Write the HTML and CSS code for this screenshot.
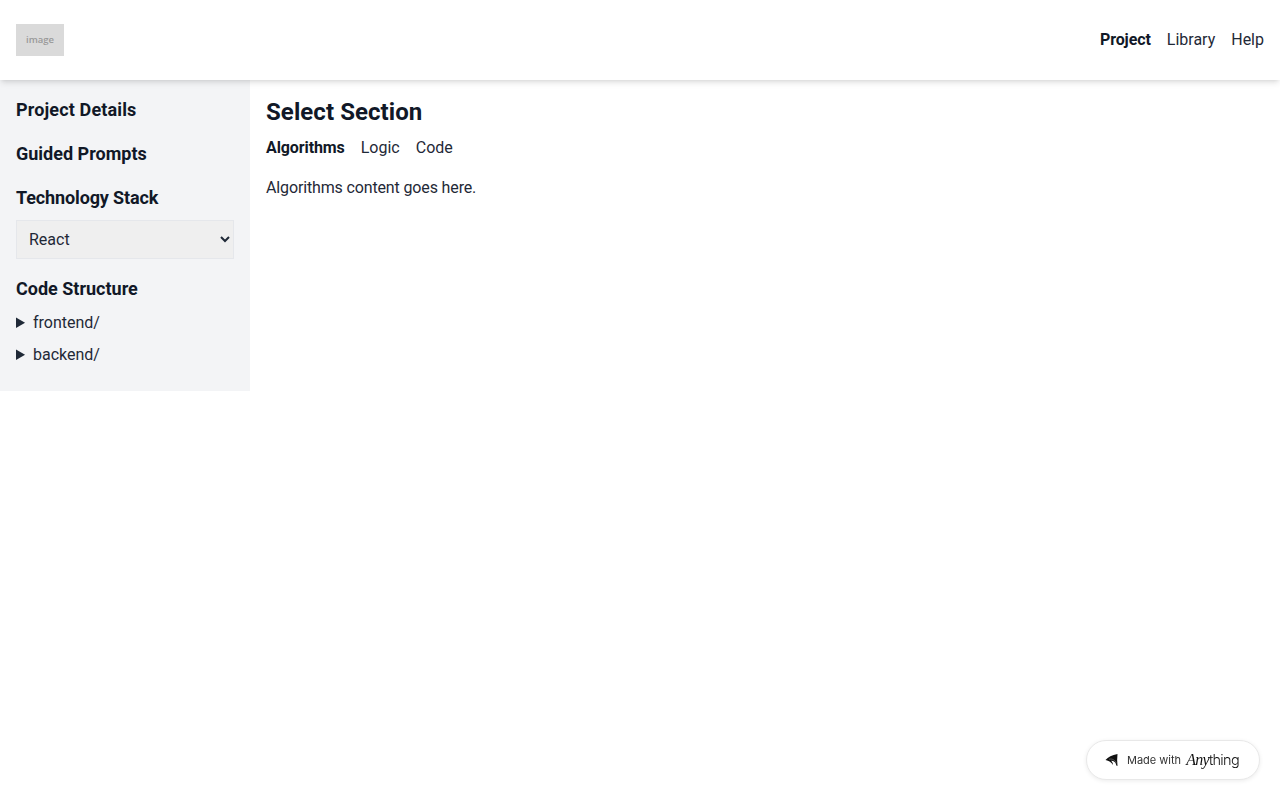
FILE: index.html
```html
<!DOCTYPE html>
<html lang="en">
<head>
    <meta charset="UTF-8">
    <meta name="viewport" content="width=device-width, initial-scale=1.0">
    <title>Project</title>
    <link rel="stylesheet" href="styles.css">
</head>
<body>

    <header class="topbar">
        <div class="logo"><span>image</span></div>
        <nav class="topnav">
            <a href="#" class="active">Project</a>
            <a href="#">Library</a>
            <a href="#">Help</a>
        </nav>
    </header>

    <div class="layout">
        <aside class="sidebar">
            <h2 class="details-title">Project Details</h2>
            <h2>Guided Prompts</h2>
            <h2 class="stack-title">Technology Stack</h2>
            <select class="stack-select">
                <option>React</option>
                <option>Vue</option>
                <option>Angular</option>
            </select>
            <h2 class="code-title">Code Structure</h2>
            <details>
                <summary>frontend/</summary>
            </details>
            <details>
                <summary>backend/</summary>
            </details>
        </aside>

        <main class="content">
            <h1>Select Section</h1>
            <div class="tabs">
                <a href="#" class="active">Algorithms</a>
                <a href="#">Logic</a>
                <a href="#">Code</a>
            </div>
            <p>Algorithms content goes here.</p>
        </main>
    </div>

    <a href="#" class="made-with">
        <svg width="14" height="13" viewBox="0 0 14 13">
            <path d="M.5 6C3 3 7 1 12.500 0c-.5 4-.5 8 0 12l-1.200-.6C11 8.800 9 6.800 6 6.800c1.200.9 1.900 2.300 2 4.200C6.500 8.300 4 6.600.5 6z" fill="#111"/>
            <path d="M4 5.200c3.500-.7 6.200 1 7.200 4" fill="none" stroke="#888" stroke-width=".6"/>
        </svg>
        <span class="made-text">Made with</span>
        <span class="brand"><i>Any</i>thing</span>
    </a>

</body>
</html>
```

FILE: styles.css
```css
* {
    box-sizing: border-box;
}
body {
    font-family: Roboto, sans-serif;
    font-size: 16px;
    line-height: 24px;
    color: #1f2937;
    background-color: #fff;
    margin: 0;
    min-height: 100vh;
}
h1, h2 {
    color: #111827;
}
a {
    color: inherit;
    text-decoration: none;
}
.topbar {
    display: flex;
    justify-content: space-between;
    align-items: center;
    height: 80px;
    padding: 0 16px;
    background: #fff;
    box-shadow: 0 4px 6px -1px rgba(0, 0, 0, 0.1), 0 2px 4px -2px rgba(0, 0, 0, 0.1);
    position: relative;
}
.logo {
    display: flex;
    justify-content: center;
    align-items: center;
    width: 48px;
    height: 32px;
    background: #dadada;
    color: #999;
    font-family: "Open Sans", sans-serif;
    font-size: 9.500px;
    line-height: 14px;
    font-weight: 600;
}
.topnav {
    display: flex;
    gap: 16px;
}
.active {
    font-weight: 700;
    letter-spacing: -0.1px;
    color: #111827;
}
.layout {
    display: flex;
    align-items: flex-start;
}
.sidebar {
    width: 250px;
    padding: 16px;
    background: #f3f4f6;
}
.sidebar h2 {
    margin: 0 0 16px;
    font-size: 18px;
    line-height: 28px;
    font-weight: 700;
}
.sidebar .details-title {
    letter-spacing: 0.14px;
}
.sidebar .stack-title {
    margin-bottom: 8px;
    letter-spacing: -0.13px;
}
.stack-select {
    display: block;
    width: 100%;
    height: 39px;
    padding: 8px;
    margin-bottom: 16px;
    font-family: inherit;
    font-size: 16px;
    color: #1f2937;
    background: #efefef;
    border: 1px solid #e5e7eb;
    border-radius: 0;
}
.sidebar .code-title {
    margin-bottom: 8px;
}
details {
    margin-bottom: 8px;
}
summary {
    cursor: pointer;
}
.content {
    flex: 1;
    padding: 16px;
}
.content h1 {
    margin: 0 0 8px;
    font-size: 24px;
    line-height: 32px;
    font-weight: 700;
    letter-spacing: 0.07px;
}
.tabs {
    display: flex;
    gap: 16px;
    margin-bottom: 16px;
}
.content p {
    margin: 0;
    letter-spacing: -0.14px;
}
.made-with {
    position: fixed;
    right: 20px;
    bottom: 20px;
    display: flex;
    align-items: center;
    width: 174px;
    height: 40px;
    padding-left: 18px;
    background: #fff;
    border: 1px solid #e8e8e8;
    border-radius: 20px;
    box-shadow: 0 1px 4px rgba(0, 0, 0, 0.08);
}
.made-text {
    margin-left: 8px;
    font-family: Inter, sans-serif;
    font-size: 11px;
    color: #333;
}
.brand {
    margin-left: 5px;
    font-family: Inter, sans-serif;
    font-size: 14.500px;
    letter-spacing: -0.7px;
    font-weight: 300;
    color: #111;
}
.brand i {
    font-family: "Liberation Serif", serif;
    font-size: 16px;
}
```
